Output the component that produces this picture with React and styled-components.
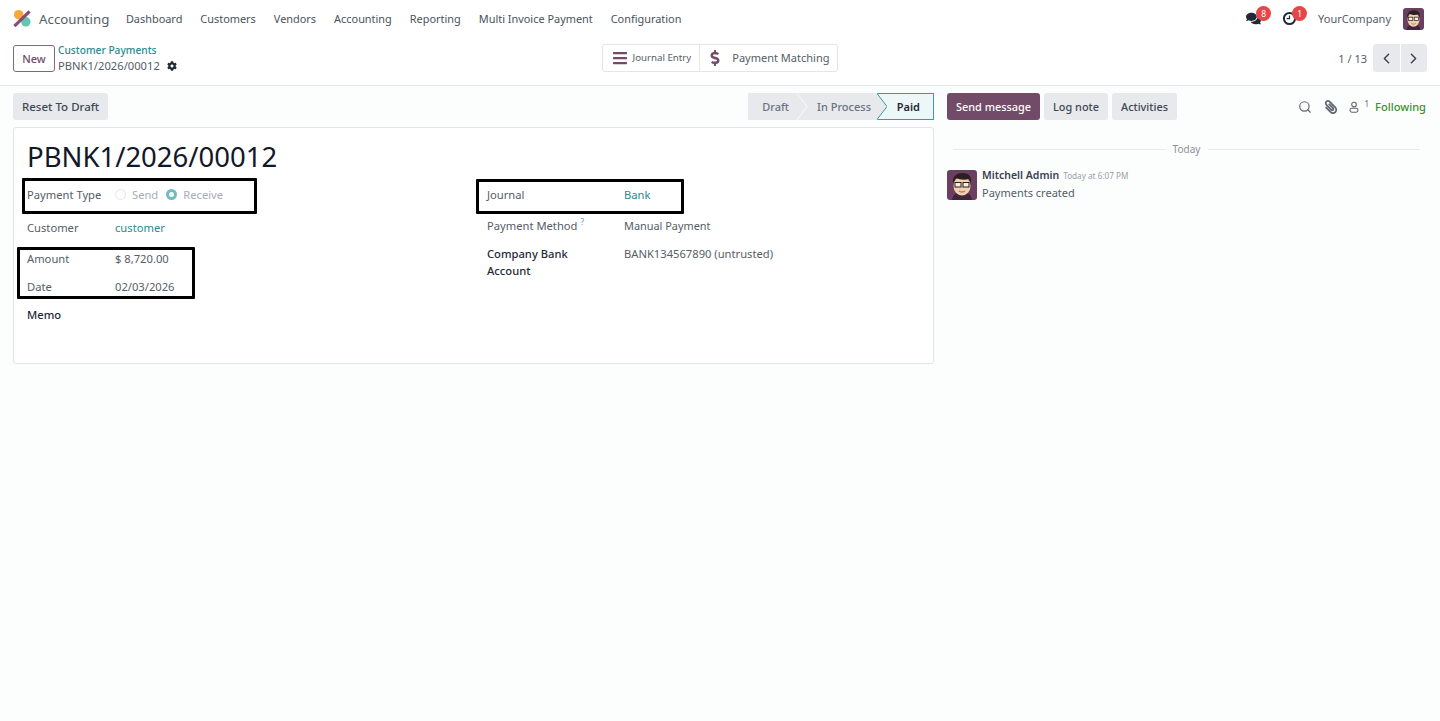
import React from "react"
import styled, { createGlobalStyle } from "styled-components"
import { FaComments, FaCog, FaDollarSign, FaBars, FaPaperclip } from "react-icons/fa"
import { FiChevronLeft, FiChevronRight, FiSearch } from "react-icons/fi"

const GlobalStyle = createGlobalStyle`
  html, body {
    margin: 0;
    padding: 0;
    background: #ffffff;
  }
  body {
    font-family: "Noto Sans", "Open Sans", sans-serif;
    font-size: 11.2px;
    color: #555d66;
  }
`

const Page = styled.div`
  width: 1440px;
  height: 721px;
  display: flex;
  flex-direction: column;
  overflow: hidden;
  background: #fcfdfd;
`

const Navbar = styled.header`
  height: 37px;
  display: flex;
  align-items: center;
  padding: 0 16px 0 13px;
  background: #fff;
`

const AppName = styled.span`
  font-size: 13.3px;
  color: #555d66;
  margin: 0 16.5px 0 8px;
`

const NavItem = styled.span`
  font-size: 10.92px;
  color: #4a525b;
  margin-right: 18px;
`

const NavRight = styled.div`
  margin-left: auto;
  display: flex;
  align-items: center;
`

const Badged = styled.span`
  position: relative;
  display: flex;
  margin-right: ${props => props.gap}px;
  color: #1f2937;
`

const Badge = styled.span`
  position: absolute;
  top: -5px;
  left: 10px;
  width: 15px;
  height: 15px;
  border-radius: 50%;
  background: #e4474a;
  color: #fff;
  font-size: 8.5px;
  line-height: 15px;
  text-align: center;
`

const Company = styled.span`
  font-size: 11px;
  margin-right: 12px;
`

const ControlPanel = styled.div`
  height: 42px;
  display: grid;
  grid-template-columns: 1fr auto 1fr;
  align-items: center;
  padding: 0 13px 6px 13px;
  background: #fff;
  border-bottom: 1px solid #e7e9ed;
`

const PanelLeft = styled.div`
  display: flex;
  align-items: center;
  gap: 3px;
`

const NewButton = styled.button`
  width: 42px;
  height: 27px;
  padding: 0;
  background: #fff;
  border: 1px solid #85657d;
  border-radius: 3px;
  color: #714b67;
  font: 500 11px "Noto Sans", sans-serif;
`

const Breadcrumb = styled.div`
  display: flex;
  flex-direction: column;
  line-height: 15px;
`

const CrumbLink = styled.span`
  color: #2a8a8f;
  font-weight: 500;
  font-size: 10.2px;
`

const CrumbCurrent = styled.span`
  display: flex;
  align-items: center;
  gap: 7px;
  font-size: 11.2px;
`

const StatGroup = styled.div`
  display: flex;
  height: 28px;
  background: #fff;
  border: 1px solid #e4e6ea;
  border-radius: 3px;
  box-sizing: border-box;
`

const StatButton = styled.div`
  display: flex;
  align-items: center;
  gap: ${props => props.gap}px;
  padding: ${props => props.pad};
  color: #714b67;
  border-left: ${props => (props.divided ? "1px solid #e4e6ea" : "none")};
`

const StatLabel = styled.span`
  margin-top: -1px;
  color: #555d66;
  font-size: ${props => props.size}px;
`

const Pager = styled.div`
  justify-self: end;
  display: flex;
  align-items: center;
  gap: 6px;
  font-size: 11px;
`

const PagerButtons = styled.div`
  display: flex;
  gap: 1px;
`

const PagerButton = styled.span`
  width: 26.5px;
  height: 28px;
  display: flex;
  align-items: center;
  justify-content: center;
  background: #e7e9ed;
  color: #374151;
  border-radius: ${props => props.radius};
`

const Main = styled.main`
  flex: 1;
  display: flex;
`

const FormColumn = styled.section`
  width: 921px;
  margin-left: 13px;
`

const StatusRow = styled.div`
  height: 41px;
  box-sizing: border-box;
  display: flex;
  align-items: flex-start;
  justify-content: space-between;
  padding-top: 7px;
`

const GreyButton = styled.button`
  height: 27px;
  padding: 0 9px 1px;
  border: 0;
  border-radius: 3px;
  background: #e7e9ed;
  color: #3f4752;
  font: 500 10.9px "Noto Sans", sans-serif;
`

const ResetButton = styled(GreyButton)`
  font-size: 11.5px;
`

const PrimaryButton = styled(GreyButton)`
  background: #714b67;
  color: #fff;
`

const StatusBar = styled.div`
  display: flex;
  height: 27px;
`

const Step = styled.span`
  position: relative;
  display: flex;
  align-items: center;
  height: 27px;
  box-sizing: border-box;
  padding: ${props => props.pad};
  background: #e7e9ed;
  color: #6b7280;
  font-size: 11px;
  font-weight: 500;
`

const StepDivider = styled.svg`
  position: absolute;
  top: 0;
  right: -10px;
  z-index: 1;
`

const ActiveStep = styled.span`
  display: flex;
  align-items: center;
  justify-content: flex-end;
  width: 57px;
  padding: 0 13px 1px 0;
  box-sizing: border-box;
  height: 27px;
  background: #eef7f7;
  color: #1f2937;
  font-size: 11px;
  font-weight: 600;
  border: 1px solid #3d9a9e;
  border-left: 0;
`

const Sheet = styled.div`
  position: relative;
  height: 237px;
  box-sizing: border-box;
  padding: 12px 13px 0;
  background: #fff;
  border: 1px solid #e1e4e8;
  border-radius: 3px;
`

const Title = styled.h1`
  margin: 0;
  height: 38px;
  color: #111827;
  font-size: 27.5px;
  font-weight: 400;
  line-height: 34px;
`

const Groups = styled.div`
  display: grid;
  grid-template-columns: 460px 1fr;
`

const FieldRow = styled.div`
  display: flex;
  height: ${props => props.h}px;
  box-sizing: border-box;
  padding-top: ${props => props.pt || 0}px;
  align-items: ${props => (props.pt ? "flex-start" : "center")};
`

const Label = styled.span`
  width: ${props => props.w}px;
  flex: none;
  color: ${props => (props.strong ? "#1f2937" : "#555d66")};
  font-weight: ${props => (props.strong ? 500 : 400)};
  line-height: 17px;
`

const Value = styled.span`
  color: ${props => (props.link ? "#2a8a8f" : "#555d66")};
  font-size: ${props => props.size || 11.2}px;
  line-height: 17px;
`

const Help = styled.sup`
  color: #5d9ab5;
  font-size: 8px;
  margin-left: 3px;
  line-height: 0;
`

const Radio = styled.span`
  width: 11px;
  height: 11px;
  box-sizing: border-box;
  border-radius: 50%;
  border: ${props => (props.on ? "3.5px solid #71bcbf" : "1px solid #e3e6ea")};
  background: #fff;
  margin-right: 6px;
`

const RadioText = styled.span`
  color: #a7adb5;
  margin-right: 8px;
`

const Marker = styled.div`
  position: absolute;
  left: ${props => props.x}px;
  top: ${props => props.y}px;
  width: ${props => props.w}px;
  height: ${props => props.h}px;
  box-sizing: border-box;
  border: 3px solid #000;
  border-radius: 1px;
`

const Chatter = styled.aside`
  flex: 1;
  margin-left: 13px;
  padding-right: 14px;
`

const ChatterBar = styled.div`
  height: 41px;
  box-sizing: border-box;
  display: flex;
  align-items: flex-start;
  gap: 4px;
  padding-top: 7px;
`

const ChatterTools = styled.div`
  margin-left: auto;
  height: 27px;
  display: flex;
  align-items: center;
  color: #5f6670;
`

const ClipIcon = styled(FaPaperclip)`
  margin-left: 12px;
  transform: scaleX(-1);
`

const FollowerIcon = styled.svg`
  margin-left: 11px;
`

const Followers = styled.sup`
  font-size: 8px;
  margin: -6px 0 0 5px;
`

const Following = styled.span`
  margin-left: 6px;
  color: #3c8f2e;
  font-size: 11.1px;
  font-weight: 500;
`

const DateLine = styled.div`
  display: flex;
  align-items: center;
  gap: 8px;
  height: 14px;
  margin: 15px 6px 0;
  color: #8b929b;
  font-size: 10px;
  &::before, &::after {
    content: "";
    flex: 1;
    border-top: 1px solid #e7e9ed;
  }
`

const Message = styled.div`
  display: flex;
  gap: 5px;
  margin-top: 14px;
`

const MessageText = styled.div`
  margin-top: -2px;
`

const Author = styled.div`
  display: flex;
  align-items: baseline;
  gap: 4px;
  height: 16px;
  font-size: 10.5px;
  font-weight: 600;
  color: #374151;
`

const Stamp = styled.span`
  font-size: 8.2px;
  font-weight: 400;
  color: #9aa0a8;
`

const Body = styled.div`
  margin-top: 1px;
  font-size: 11px;
`

function Logo() {
  return (
    <svg width="18" height="19" viewBox="0 0 19 19">
      <circle cx="6" cy="5.5" r="5" fill="#f3a93c" />
      <circle cx="13.5" cy="13" r="5" fill="#5fc8b4" />
      <path d="M1.5 17.5 17.5 2" stroke="#8d4a77" strokeWidth="3.4" />
    </svg>
  )
}

function ActivityIcon() {
  return (
    <svg width="15" height="15" viewBox="0 0 15 15" fill="none">
      <circle cx="7.5" cy="7.5" r="5.6" stroke="#1f2937" strokeWidth="2" />
      <path d="M7.5 4.5v3.2H4.6" stroke="#1f2937" strokeWidth="1.2" />
    </svg>
  )
}

function Face({ w, h, radius }) {
  return (
    <svg width={w} height={h} viewBox="0 0 30 30" preserveAspectRatio="none" style={{ borderRadius: radius, flex: "none" }}>
      <rect width="30" height="30" fill="#6b3f60" />
      <path d="M5 30c1-6 5-8 10-8s9 2 10 8z" fill="#40263a" />
      <ellipse cx="15" cy="16" rx="8.5" ry="9.5" fill="#f2cfb0" />
      <path d="M6 13c-1-7 4-10 10-10s9 4 8 10l-2-4c-4 1-9 1-13-1z" fill="#2b1f23" />
      <rect x="8" y="12.5" width="6" height="4.5" fill="#fff" fillOpacity=".6" stroke="#222" strokeWidth="1" />
      <rect x="16" y="12.5" width="6" height="4.5" fill="#fff" fillOpacity=".6" stroke="#222" strokeWidth="1" />
      <path d="M12 21c2 1.4 4 1.4 6 0" stroke="#a5553f" strokeWidth="1" fill="none" />
    </svg>
  )
}

const navItems = ["Dashboard", "Customers", "Vendors", "Accounting", "Reporting", "Multi Invoice Payment", "Configuration"]

export default function App() {
  return (
    <Page>
      <GlobalStyle />
      <Navbar>
        <Logo />
        <AppName>Accounting</AppName>
        {navItems.map(item => (
          <NavItem key={item}>{item}</NavItem>
        ))}
        <NavRight>
          <Badged gap={21}>
            <FaComments size={15} />
            <Badge>8</Badge>
          </Badged>
          <Badged gap={21}>
            <ActivityIcon />
            <Badge>1</Badge>
          </Badged>
          <Company>YourCompany</Company>
          <Face w={21} h={22} radius="3px" />
        </NavRight>
      </Navbar>

      <ControlPanel>
        <PanelLeft>
          <NewButton>New</NewButton>
          <Breadcrumb>
            <CrumbLink>Customer Payments</CrumbLink>
            <CrumbCurrent>
              PBNK1/2026/00012 <FaCog size={10} color="#1f2937" />
            </CrumbCurrent>
          </Breadcrumb>
        </PanelLeft>
        <StatGroup>
          <StatButton gap={5} pad="0 8px 0 9px">
            <FaBars size={16} />
            <StatLabel size={9.7}>Journal Entry</StatLabel>
          </StatButton>
          <StatButton divided gap={9} pad="0 8px 0 7px">
            <FaDollarSign size={16} />
            <StatLabel size={11}>Payment Matching</StatLabel>
          </StatButton>
        </StatGroup>
        <Pager>
          1 / 13
          <PagerButtons>
            <PagerButton radius="3px 0 0 3px"><FiChevronLeft size={17} /></PagerButton>
            <PagerButton radius="0 3px 3px 0"><FiChevronRight size={17} /></PagerButton>
          </PagerButtons>
        </Pager>
      </ControlPanel>

      <Main>
        <FormColumn>
          <StatusRow>
            <ResetButton>Reset To Draft</ResetButton>
            <StatusBar>
              <Step pad="0 8px 1px 14px">
                Draft
                <StepDivider width="10" height="27" viewBox="0 0 10 27">
                  <path d="M0 0 10 13.5 0 27z" fill="#e7e9ed" />
                  <path d="M0 0 10 13.5 0 27" fill="none" stroke="#f8f9fa" />
                </StepDivider>
              </Step>
              <Step pad="0 6px 1px 20px">
                In Process
                <StepDivider width="10" height="27" viewBox="0 0 10 27">
                  <path d="M0 0 10 13.5 0 27z" fill="#e7e9ed" />
                  <path d="M0 .5 10 13.5 0 26.5" fill="none" stroke="#3d9a9e" />
                </StepDivider>
              </Step>
              <ActiveStep>Paid</ActiveStep>
            </StatusBar>
          </StatusRow>
          <Sheet>
            <Title>PBNK1/2026/00012</Title>
            <Groups>
              <div>
                <FieldRow h={32}>
                  <Label w={88}>Payment Type</Label>
                  <Radio />
                  <RadioText>Send</RadioText>
                  <Radio on />
                  <RadioText>Receive</RadioText>
                </FieldRow>
                <FieldRow h={35}>
                  <Label w={88}>Customer</Label>
                  <Value link>customer</Value>
                </FieldRow>
                <FieldRow h={27}>
                  <Label w={88}>Amount</Label>
                  <Value>$ 8,720.00</Value>
                </FieldRow>
                <FieldRow h={28}>
                  <Label w={88}>Date</Label>
                  <Value>02/03/2026</Value>
                </FieldRow>
                <FieldRow h={28}>
                  <Label w={88} strong>Memo</Label>
                </FieldRow>
              </div>
              <div>
                <FieldRow h={32}>
                  <Label w={137}>Journal</Label>
                  <Value link>Bank</Value>
                </FieldRow>
                <FieldRow h={30}>
                  <Label w={137}>
                    Payment Method<Help>?</Help>
                  </Label>
                  <Value size={10.9}>Manual Payment</Value>
                </FieldRow>
                <FieldRow h={45} pt={5}>
                  <Label w={137} strong>Company Bank<br />Account</Label>
                  <Value>BANK134567890 (untrusted)</Value>
                </FieldRow>
              </div>
            </Groups>
            <Marker x={8} y={50} w={235} h={36} />
            <Marker x={3} y={119} w={178} h={52} />
            <Marker x={462} y={51} w={208} h={35} />
          </Sheet>
        </FormColumn>

        <Chatter>
          <ChatterBar>
            <PrimaryButton>Send message</PrimaryButton>
            <GreyButton>Log note</GreyButton>
            <GreyButton>Activities</GreyButton>
            <ChatterTools>
              <FiSearch size={14} />
              <ClipIcon size={14} />
              <FollowerIcon width="10" height="14" viewBox="0 0 12 14" fill="none" stroke="currentColor" strokeWidth="1.3">
                <circle cx="6" cy="4" r="2.8" />
                <rect x="1.2" y="8.4" width="9.6" height="4.8" rx="2.2" />
              </FollowerIcon>
              <Followers>1</Followers>
              <Following>Following</Following>
            </ChatterTools>
          </ChatterBar>
          <DateLine>Today</DateLine>
          <Message>
            <Face w={30} h={30} radius="3px" />
            <MessageText>
              <Author>
                Mitchell Admin <Stamp>Today at 6:07 PM</Stamp>
              </Author>
              <Body>Payments created</Body>
            </MessageText>
          </Message>
        </Chatter>
      </Main>
    </Page>
  )
}
